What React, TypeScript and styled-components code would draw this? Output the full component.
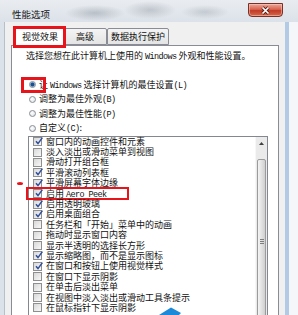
import styled, { createGlobalStyle } from 'styled-components';

const GlobalStyle = createGlobalStyle`
  html, body { margin: 0; padding: 0; }
  body {
    width: 298px;
    height: 315px;
    overflow: hidden;
    background: #fff;
    font-family: "Noto Sans CJK SC", "Liberation Sans", sans-serif;
    color: #111;
  }
`;

const Window = styled.div`
  position: relative;
  width: 298px;
  height: 315px;
  display: flex;
  flex-direction: column;
  overflow: hidden;
  background: #dbe2ea;
`;

const TitleBar = styled.div`
  height: 22px;
  flex: none;
  display: flex;
  align-items: flex-start;
  justify-content: space-between;
  padding: 0 15px 0 12px;
  background:
    radial-gradient(ellipse 30px 8px at 95px 13px, rgba(110, 118, 128, 0.35), transparent),
    radial-gradient(ellipse 26px 9px at 150px 10px, rgba(110, 118, 128, 0.3), transparent),
    radial-gradient(ellipse 24px 7px at 205px 12px, rgba(120, 128, 138, 0.28), transparent),
    linear-gradient(#e9edf1, #dce2e9);
`;

const Title = styled.span`
  margin-top: 9px;
  font-size: 9.5px;
  line-height: 10px;
  color: #202020;
`;

const CloseButton = styled.div`
  margin-top: 3px;
  width: 35px;
  height: 14px;
  box-sizing: border-box;
  display: flex;
  align-items: center;
  justify-content: center;
  border: 1px solid #7c2f25;
  border-radius: 0 0 4px 4px;
  background: linear-gradient(#eaa898, #d8634f 45%, #c23a26 55%, #d26a4c);
  box-shadow: inset 0 0 0 1px rgba(255, 210, 200, 0.5);
`;

const Frame = styled.div`
  flex: 1;
  min-height: 0;
  display: flex;
`;

const Client = styled.div`
  flex: 1;
  margin-left: 4px;
  padding: 5px 6px 0 6px;
  display: flex;
  flex-direction: column;
  background: #f0f0f0;
  border-left: 1px solid #b6c0cb;
`;

const RightEdge = styled.div`
  width: 11px;
  flex: none;
  border-left: 4px solid #b3cae6;
  background: #f4f6f9;
`;

const TabStrip = styled.div`
  height: 18px;
  flex: none;
  display: flex;
  align-items: flex-end;
  padding-left: 6px;
`;

const Tab = styled.div<{ $active?: boolean; $marked?: boolean }>`
  position: relative;
  height: ${(p) => (p.$active ? 19 : 14)}px;
  min-width: 36px;
  padding: ${(p) => (p.$active ? '0 6px' : '1px 3px 0')};
  margin: ${(p) => (p.$active ? '0 -2px -1px' : '0')};
  z-index: ${(p) => (p.$active ? 1 : 0)};
  display: flex;
  align-items: center;
  justify-content: center;
  font-size: 9px;
  line-height: 10px;
  border: 1px solid #898c95;
  border-bottom: ${(p) => (p.$active ? 'none' : '1px solid #898c95')};
  border-radius: 2px 2px 0 0;
  background: ${(p) => (p.$active ? '#fff' : 'linear-gradient(#f4f4f4, #e4e4e4)')};

  &::after {
    content: '';
    display: ${(p) => (p.$marked ? 'block' : 'none')};
    position: absolute;
    left: -3px;
    right: -2px;
    top: -1px;
    bottom: -2px;
    border: 3px solid #e8141b;
  }
`;

const Panel = styled.div`
  flex: 1;
  display: flex;
  flex-direction: column;
  padding: 5px 10px 0 14px;
  background: #fff;
  border: 1px solid #898c95;
  border-bottom: none;
`;

const Intro = styled.div`
  height: 10px;
  font-size: 9px;
  line-height: 10px;
  white-space: nowrap;
`;

const Latin = styled.span`
  font-family: "Liberation Mono", monospace;
  font-size: 8.5px;
  letter-spacing: -0.6px;
`;

const RadioGroup = styled.div`
  margin: 16.5px 0 0 3px;
  display: flex;
  flex-direction: column;
`;

const RadioRow = styled.div<{ $marked?: boolean }>`
  position: relative;
  height: 14.5px;
  display: flex;
  align-items: center;
  gap: 3px;

  &::after {
    content: '';
    display: ${(p) => (p.$marked ? 'block' : 'none')};
    position: absolute;
    left: -8px;
    top: -1px;
    width: 25px;
    height: 16px;
    box-sizing: border-box;
    border: 3px solid #e8141b;
  }
`;

const Label = styled.span`
  display: block;
  height: 10px;
  font-size: 9px;
  line-height: 10px;
  white-space: nowrap;
`;

const Radio = styled.span<{ $on?: boolean }>`
  width: 7px;
  height: 7px;
  flex: none;
  box-sizing: border-box;
  border-radius: 50%;
  border: 1px solid #8a8e94;
  background: ${(p) =>
    p.$on
      ? 'radial-gradient(circle, #1c4f8c 0 1.6px, #7fb0e0 2.2px, #e8eef5 3px)'
      : 'radial-gradient(circle at 40% 40%, #ffffff, #d9dde2)'};
`;

const ListBox = styled.div`
  margin: 0 0 0 2px;
  width: 240px;
  flex: 1;
  display: flex;
  box-sizing: border-box;
  border: 1px solid #828790;
  border-bottom: none;
  background: #fff;
`;

const Rows = styled.div`
  flex: 1;
  padding-left: 4px;
  display: flex;
  flex-direction: column;
`;

const Row = styled.div<{ $marked?: boolean; $dot?: boolean }>`
  position: relative;
  height: 10.4px;
  flex: none;
  display: flex;
  align-items: center;
  gap: 4px;

  &::after {
    content: '';
    display: ${(p) => (p.$marked ? 'block' : 'none')};
    position: absolute;
    left: -7px;
    top: -1px;
    width: 103px;
    height: 13px;
    box-sizing: border-box;
    border: 2px solid #e8141b;
  }

  &::before {
    content: '';
    display: ${(p) => (p.$dot ? 'block' : 'none')};
    position: absolute;
    left: -16px;
    top: 3.5px;
    width: 6px;
    height: 3px;
    border-radius: 50%;
    background: #e8141b;
  }
`;

const Box = styled.span`
  position: relative;
  width: 9px;
  height: 9px;
  flex: none;
  box-sizing: border-box;
  border: 1px solid #8f8f8f;
  background: linear-gradient(135deg, #d8d8d8, #f8f8f8);
`;

const Check = styled.svg`
  position: absolute;
  left: 0;
  top: -2px;
`;

const ScrollBar = styled.div`
  width: 11px;
  flex: none;
  display: flex;
  flex-direction: column;
  align-items: center;
  background: #eaeaea;
  border-left: 1px solid #f7f7f7;
`;

const ScrollUp = styled.div`
  height: 19px;
  width: 100%;
  display: flex;
  align-items: center;
  justify-content: center;
  padding-bottom: 5px;
  box-sizing: border-box;
`;

const Thumb = styled.div`
  margin-top: 3px;
  width: 9px;
  height: 166px;
  flex: none;
  box-sizing: border-box;
  display: flex;
  flex-direction: column;
  align-items: center;
  justify-content: center;
  gap: 1px;
  border: 1px solid #9b9b9b;
  border-radius: 2px;
  background: linear-gradient(90deg, #f4f4f4, #e2e2e2 50%, #cfcfcf);
`;

const Grip = styled.span`
  width: 4px;
  height: 1px;
  background: #7d7d7d;
`;

const Pointer = styled.svg`
  position: absolute;
  left: 155px;
  top: 305px;
`;

const items: [string, boolean][] = [
  ['窗口内的动画控件和元素', true],
  ['淡入淡出或滑动菜单到视图', false],
  ['滑动打开组合框', false],
  ['平滑滚动列表框', true],
  ['平滑屏幕字体边缘', true],
  ['AERO', true],
  ['启用透明玻璃', true],
  ['启用桌面组合', true],
  ['任务栏和「开始」菜单中的动画', false],
  ['拖动时显示窗口内容', false],
  ['显示半透明的选择长方形', false],
  ['显示缩略图，而不是显示图标', true],
  ['在窗口和按钮上使用视觉样式', true],
  ['在窗口下显示阴影', false],
  ['在单击后淡出菜单', false],
  ['在视图中淡入淡出或滑动工具条提示', false],
  ['在鼠标指针下显示阴影', false],
];

const CheckMark = () => (
  <Check width="10" height="10" viewBox="0 0 10 10">
    <path d="M2 5.2 L4 7.6 L8.4 1.6" fill="none" stroke="#2f4f9a" strokeWidth="1.5" />
  </Check>
);

export default function App() {
  return (
    <>
      <GlobalStyle />
      <Window>
        <TitleBar>
          <Title>性能选项</Title>
          <CloseButton>
            <svg width="11" height="9" viewBox="0 0 11 9">
              <path d="M2.5 1.5 L8.5 7.5 M8.5 1.5 L2.5 7.5" stroke="#5b1b12" strokeWidth="3.2" />
              <path d="M2.5 1.5 L8.5 7.5 M8.5 1.5 L2.5 7.5" stroke="#fff" strokeWidth="1.7" />
            </svg>
          </CloseButton>
        </TitleBar>
        <Frame>
          <Client>
            <TabStrip>
              <Tab $active $marked>视觉效果</Tab>
              <Tab>高级</Tab>
              <Tab>数据执行保护</Tab>
            </TabStrip>
            <Panel>
              <Intro>
                选择您想在此计算机上使用的 <Latin>Windows</Latin> 外观和性能设置。
              </Intro>
              <RadioGroup>
                <RadioRow $marked>
                  <Radio $on />
                  <Label>
                    让 <Latin>Windows</Latin> 选择计算机的最佳设置<Latin>(L)</Latin>
                  </Label>
                </RadioRow>
                <RadioRow>
                  <Radio />
                  <Label>
                    调整为最佳外观<Latin>(B)</Latin>
                  </Label>
                </RadioRow>
                <RadioRow>
                  <Radio />
                  <Label>
                    调整为最佳性能<Latin>(P)</Latin>
                  </Label>
                </RadioRow>
                <RadioRow>
                  <Radio />
                  <Label>
                    自定义<Latin>(C)</Latin>:
                  </Label>
                </RadioRow>
              </RadioGroup>
              <ListBox>
                <Rows>
                  {items.map(([label, on], i) => (
                    <Row key={i} $marked={label === 'AERO'} $dot={i === 4}>
                      <Box>{on && <CheckMark />}</Box>
                      {label === 'AERO' ? (
                        <Label>
                          启用 <Latin>Aero Peek</Latin>
                        </Label>
                      ) : (
                        <Label>{label}</Label>
                      )}
                    </Row>
                  ))}
                </Rows>
                <ScrollBar>
                  <ScrollUp>
                    <svg width="5" height="3" viewBox="0 0 5 3">
                      <path d="M0 3 L2.5 0 L5 3 Z" fill="#404040" />
                    </svg>
                  </ScrollUp>
                  <Thumb>
                    <Grip />
                    <Grip />
                    <Grip />
                  </Thumb>
                </ScrollBar>
              </ListBox>
            </Panel>
          </Client>
          <RightEdge />
        </Frame>
        <Pointer width="30" height="10" viewBox="0 0 30 10">
          <path d="M4 10 L16 2.5 L26 8 L24 10 Z" fill="#1c8ad8" />
        </Pointer>
      </Window>
    </>
  );
}
